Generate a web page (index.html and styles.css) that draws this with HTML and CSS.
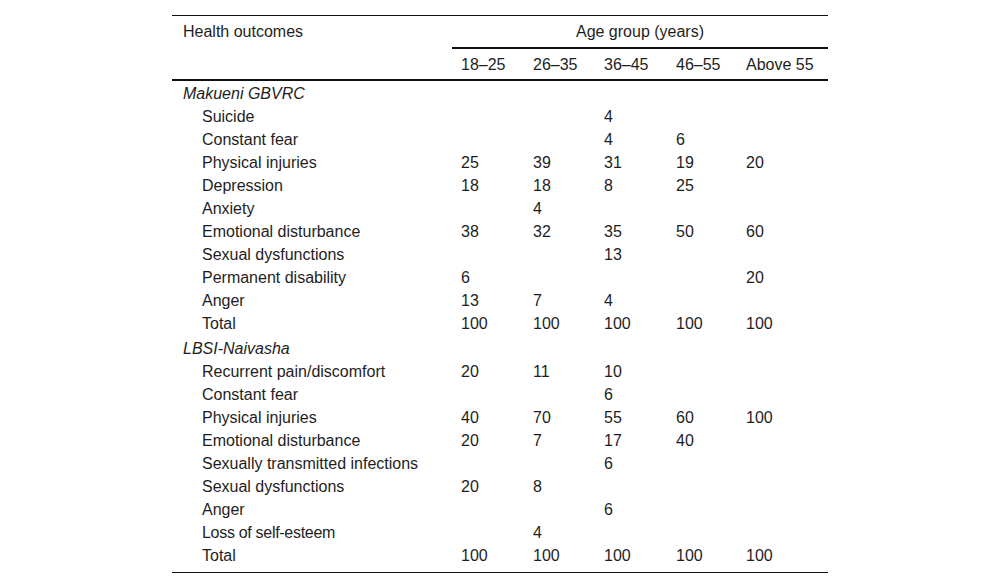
FILE: index.html
```html
<!DOCTYPE html>
<html>
<head>
<meta charset="utf-8">
<link rel="stylesheet" href="styles.css">
</head>
<body>
<div class="wrap">
<table class="tbl">
  <colgroup>
    <col class="c-label">
    <col class="c-a">
    <col class="c-b">
    <col class="c-c">
    <col class="c-d">
    <col class="c-e">
  </colgroup>
  <thead>
    <tr>
      <th class="h-label" rowspan="2">Health outcomes</th>
      <th class="h-group" colspan="5">Age group (years)</th>
    </tr>
    <tr class="h-ages">
      <th>18–25</th>
      <th>26–35</th>
      <th>36–45</th>
      <th>46–55</th>
      <th>Above 55</th>
    </tr>
  </thead>
  <tbody>
    <tr class="sec first"><td class="sec-name">Makueni GBVRC</td><td></td><td></td><td></td><td></td><td></td></tr>
    <tr><td class="item">Suicide</td><td></td><td></td><td>4</td><td></td><td></td></tr>
    <tr><td class="item">Constant fear</td><td></td><td></td><td>4</td><td>6</td><td></td></tr>
    <tr><td class="item">Physical injuries</td><td>25</td><td>39</td><td>31</td><td>19</td><td>20</td></tr>
    <tr><td class="item">Depression</td><td>18</td><td>18</td><td>8</td><td>25</td><td></td></tr>
    <tr><td class="item">Anxiety</td><td></td><td>4</td><td></td><td></td><td></td></tr>
    <tr><td class="item">Emotional disturbance</td><td>38</td><td>32</td><td>35</td><td>50</td><td>60</td></tr>
    <tr><td class="item">Sexual dysfunctions</td><td></td><td></td><td>13</td><td></td><td></td></tr>
    <tr><td class="item">Permanent disability</td><td>6</td><td></td><td></td><td></td><td>20</td></tr>
    <tr><td class="item">Anger</td><td>13</td><td>7</td><td>4</td><td></td><td></td></tr>
    <tr><td class="item">Total</td><td>100</td><td>100</td><td>100</td><td>100</td><td>100</td></tr>
    <tr class="sec second"><td class="sec-name">LBSI-Naivasha</td><td></td><td></td><td></td><td></td><td></td></tr>
    <tr><td class="item">Recurrent pain/discomfort</td><td>20</td><td>11</td><td>10</td><td></td><td></td></tr>
    <tr><td class="item">Constant fear</td><td></td><td></td><td>6</td><td></td><td></td></tr>
    <tr><td class="item">Physical injuries</td><td>40</td><td>70</td><td>55</td><td>60</td><td>100</td></tr>
    <tr><td class="item">Emotional disturbance</td><td>20</td><td>7</td><td>17</td><td>40</td><td></td></tr>
    <tr><td class="item">Sexually transmitted infections</td><td></td><td></td><td>6</td><td></td><td></td></tr>
    <tr><td class="item">Sexual dysfunctions</td><td>20</td><td>8</td><td></td><td></td><td></td></tr>
    <tr><td class="item">Anger</td><td></td><td></td><td>6</td><td></td><td></td></tr>
    <tr><td class="item narrow">Loss of self-esteem</td><td></td><td>4</td><td></td><td></td><td></td></tr>
    <tr class="last"><td class="item">Total</td><td>100</td><td>100</td><td>100</td><td>100</td><td>100</td></tr>
  </tbody>
</table>
</div>
</body>
</html>
```
FILE: styles.css
```css
html, body {
  margin: 0;
  padding: 0;
  background: #fff;
}

body {
  font-family: "Liberation Sans", Arial, Helvetica, sans-serif;
  font-size: 16px;
  color: #1e1e1e;
}

.wrap {
  padding-top: 15px;
}

.tbl {
  margin: 0 auto;
  width: 656px;
  table-layout: fixed;
  border-collapse: separate;
  border-spacing: 0;
  border-top: 1px solid #111;
  border-bottom: 1px solid #111;
}

.c-label { width: 280px; }
.c-a { width: 72px; }
.c-b { width: 71px; }
.c-c { width: 72px; }
.c-d { width: 70px; }
.c-e { width: 91px; }

.tbl th,
.tbl td {
  font-weight: normal;
  line-height: 23px;
  padding: 0 0 0 9px;
  text-align: left;
  vertical-align: top;
  white-space: nowrap;
}

.tbl th.h-label {
  padding: 4px 0 0 11px;
  border-bottom: 2px solid #111;
}

.tbl th.h-group {
  padding: 4px 0;
  text-align: center;
  border-bottom: 2px solid #111;
}

.h-ages th {
  padding: 4px 0 3px 9px;
  border-bottom: 2px solid #111;
}

.tbl td.sec-name {
  padding-left: 11px;
  font-style: italic;
}

.tbl td.item {
  padding-left: 30px;
}

.tbl td.narrow {
  letter-spacing: -0.3px;
}

.sec.first td {
  padding-top: 1px;
}

.sec.second td {
  padding-top: 2px;
}

.last td {
  padding-bottom: 5px;
}
```
